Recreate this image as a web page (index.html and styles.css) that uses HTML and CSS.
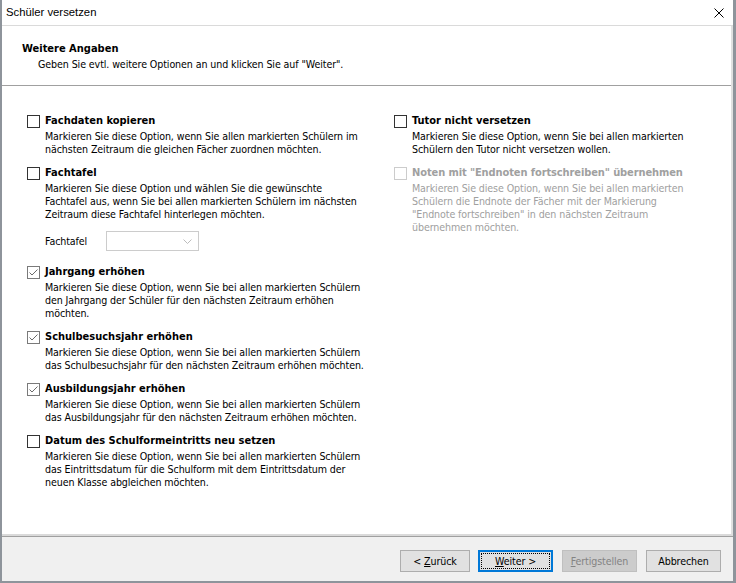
FILE: index.html
```html
<!DOCTYPE html>
<html lang="de">
<head>
<meta charset="utf-8">
<title>Schüler versetzen</title>
<link rel="stylesheet" href="styles.css">
</head>
<body>
<div class="window">

  <div class="titlebar">
    <span class="title">Schüler versetzen</span>
    <svg class="close" width="10" height="10" viewBox="0 0 10 10">
      <path d="M0.5 0.5 L9.5 9.5 M9.5 0.5 L0.5 9.5" stroke="#000" stroke-width="1" fill="none"/>
    </svg>
  </div>

  <div class="page">
    <div class="header">
      <div class="header-title">Weitere Angaben</div>
      <div class="header-sub">Geben Sie evtl. weitere Optionen an und klicken Sie auf "Weiter".</div>
    </div>

    <div class="content">
      <div class="column">
        <div class="option">
          <span class="check"></span>
          <div>
            <div class="option-label">Fachdaten kopieren</div>
            <div class="option-desc">Markieren Sie diese Option, wenn Sie allen markierten Schülern im<br>nächsten Zeitraum die gleichen Fächer zuordnen möchten.</div>
          </div>
        </div>

        <div class="option">
          <span class="check"></span>
          <div>
            <div class="option-label">Fachtafel</div>
            <div class="option-desc">Markieren Sie diese Option und wählen Sie die gewünschte<br>Fachtafel aus, wenn Sie bei allen markierten Schülern im nächsten<br>Zeitraum diese Fachtafel hinterlegen möchten.</div>
            <div class="combo-row">
              <span class="combo-label">Fachtafel</span>
              <span class="combo">
                <svg width="9" height="5" viewBox="0 0 9 5"><path d="M0.5 0.5 L4.5 4.5 L8.5 0.5" stroke="#bcbcbc" fill="none"/></svg>
              </span>
            </div>
          </div>
        </div>

        <div class="option">
          <span class="check checked"><svg width="11" height="11" viewBox="0 0 11 11"><path d="M1.5 5.5 L4 8 L9.5 2.5" stroke="#6a6a6a" fill="none"/></svg></span>
          <div>
            <div class="option-label">Jahrgang erhöhen</div>
            <div class="option-desc">Markieren Sie diese Option, wenn Sie bei allen markierten Schülern<br>den Jahrgang der Schüler für den nächsten Zeitraum erhöhen<br>möchten.</div>
          </div>
        </div>

        <div class="option">
          <span class="check checked"><svg width="11" height="11" viewBox="0 0 11 11"><path d="M1.5 5.5 L4 8 L9.5 2.5" stroke="#6a6a6a" fill="none"/></svg></span>
          <div>
            <div class="option-label">Schulbesuchsjahr erhöhen</div>
            <div class="option-desc">Markieren Sie diese Option, wenn Sie bei allen markierten Schülern<br>das Schulbesuchsjahr für den nächsten Zeitraum erhöhen möchten.</div>
          </div>
        </div>

        <div class="option">
          <span class="check checked"><svg width="11" height="11" viewBox="0 0 11 11"><path d="M1.5 5.5 L4 8 L9.5 2.5" stroke="#6a6a6a" fill="none"/></svg></span>
          <div>
            <div class="option-label">Ausbildungsjahr erhöhen</div>
            <div class="option-desc">Markieren Sie diese Option, wenn Sie bei allen markierten Schülern<br>das Ausbildungsjahr für den nächsten Zeitraum erhöhen möchten.</div>
          </div>
        </div>

        <div class="option">
          <span class="check"></span>
          <div>
            <div class="option-label">Datum des Schulformeintritts neu setzen</div>
            <div class="option-desc">Markieren Sie diese Option, wenn Sie bei allen markierten Schülern<br>das Eintrittsdatum für die Schulform mit dem Eintrittsdatum der<br>neuen Klasse abgleichen möchten.</div>
          </div>
        </div>
      </div>

      <div class="column">
        <div class="option">
          <span class="check"></span>
          <div>
            <div class="option-label">Tutor nicht versetzen</div>
            <div class="option-desc">Markieren Sie diese Option, wenn Sie bei allen markierten<br>Schülern den Tutor nicht versetzen wollen.</div>
          </div>
        </div>

        <div class="option disabled">
          <span class="check"></span>
          <div>
            <div class="option-label tight">Noten mit "Endnoten fortschreiben" übernehmen</div>
            <div class="option-desc">Markieren Sie diese Option, wenn Sie bei allen markierten<br>Schülern die Endnote der Fächer mit der Markierung<br>"Endnote fortschreiben" in den nächsten Zeitraum<br>übernehmen möchten.</div>
          </div>
        </div>
      </div>
    </div>
  </div>

  <div class="buttons">
    <span class="btn btn-back"><span>&lt; <u>Z</u>urück</span></span>
    <span class="btn btn-default"><span class="focus"><span><u>W</u>eiter &gt;</span></span></span>
    <span class="btn btn-disabled"><span><u>F</u>ertigstellen</span></span>
    <span class="btn"><span>Abbrechen</span></span>
  </div>

</div>
</body>
</html>
```

FILE: styles.css
```css
html, body {
  margin: 0;
  padding: 0;
  background: #ffffff;
}

body {
  font-family: "DejaVu Sans Condensed", "DejaVu Sans", sans-serif;
  font-stretch: semi-condensed;
  font-size: 10.6px;
  letter-spacing: -0.1px;
  line-height: 13px;
  color: #000000;
}

.window {
  width: 736px;
  height: 583px;
  box-sizing: border-box;
  border-left: 2px solid #8e949b;
  border-right: 3px solid #8e949b;
  border-bottom: 2px solid #8e949b;
  display: flex;
  flex-direction: column;
}

/* title bar */
.titlebar {
  height: 25px;
  flex: none;
  border-bottom: 1px solid #dadada;
  display: flex;
  align-items: center;
  justify-content: space-between;
  padding: 0 9px 0 4px;
}

.title {
  font-family: "Liberation Sans", Arial, sans-serif;
  font-stretch: normal;
  font-size: 11.3px;
  letter-spacing: 0;
}

.close {
  display: block;
}

/* wizard page */
.page {
  flex: 1;
  display: flex;
  flex-direction: column;
  border-right: 2px solid #e0e0e0;
  border-bottom: 2px solid #dadada;
}

.header {
  height: 60px;
  flex: none;
  box-sizing: border-box;
  border-bottom: 1px solid #a0a0a0;
  padding: 16px 0 0 20px;
}

.header-title {
  font-weight: bold;
  letter-spacing: 0;
  font-size: 11px;
}

.header-sub {
  margin-top: 3px;
  padding-left: 16px;
}

.content {
  flex: 1;
  display: grid;
  grid-template-columns: 367px 1fr;
  align-items: start;
  padding: 28px 0 0 25px;
}

.column {
  display: flex;
  flex-direction: column;
  gap: 10px;
}

.option {
  display: grid;
  grid-template-columns: 18px 1fr;
  white-space: nowrap;
}

.option-label {
  font-weight: bold;
  font-size: 11px;
  letter-spacing: 0;
}

.option-label.tight {
  letter-spacing: -0.1px;
}

.option-desc {
  margin-top: 3px;
}

.check {
  width: 13px;
  height: 13px;
  box-sizing: border-box;
  border: 1px solid #333333;
  background: #ffffff;
  margin-top: 1px;
  display: flex;
  align-items: center;
  justify-content: center;
}

.check.checked {
  border-color: #7a7a7a;
}

.option.disabled {
  color: #a0a0a0;
}

.option.disabled .check {
  border-color: #cccccc;
}

.combo-row {
  display: flex;
  align-items: center;
  margin: 10px 0 4px;
}

.combo-label {
  width: 61px;
}

.combo {
  width: 93px;
  height: 20px;
  box-sizing: border-box;
  border: 1px solid #cccccc;
  background: #ffffff;
  display: flex;
  align-items: center;
  justify-content: flex-end;
  padding-right: 6px;
}

/* button strip */
.buttons {
  height: 45px;
  flex: none;
  box-sizing: border-box;
  border-top: 1px solid #a0a0a0;
  background: #f0f0f0;
  display: flex;
  justify-content: flex-end;
  align-items: flex-start;
  gap: 9px;
  padding: 13px 12px 0 0;
  white-space: pre;
}

.btn {
  width: 75px;
  height: 22px;
  box-sizing: border-box;
  border: 1px solid #adadad;
  background: #e1e1e1;
  display: flex;
  align-items: center;
  justify-content: center;
}

.btn-back {
  width: 70px;
  margin-right: -1px;
}

.btn-default {
  border: 2px solid #0078d7;
  padding: 1px;
}

.btn-default .focus {
  flex: 1;
  align-self: stretch;
  border: 1px dotted #000000;
  display: flex;
  align-items: center;
  justify-content: center;
}

.btn-disabled {
  background: #cccccc;
  border-color: #bfbfbf;
  color: #838383;
}
```
